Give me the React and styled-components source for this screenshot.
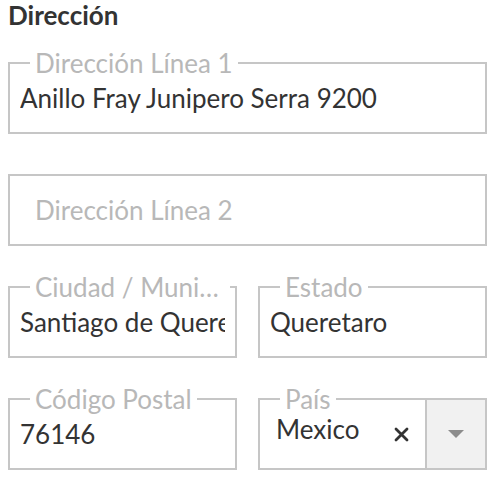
import React from "react";
import styled, { createGlobalStyle } from "styled-components";

const GlobalStyle = createGlobalStyle`
  body {
    margin: 0;
    background: #fff;
    font-family: Lato, "Open Sans", sans-serif;
    color: #333;
  }
`;

const Page = styled.div`
  width: 479px;
  padding: 0 11px 0 8px;
  display: flex;
  flex-direction: column;
  gap: 25px;
`;

const Title = styled.h2`
  margin: 0 0 -8px;
  font-size: 26px;
  font-weight: 700;
  line-height: 30px;
  color: #333;
`;

const Row = styled.div`
  display: grid;
  grid-template-columns: 1fr 1fr;
  gap: 21px;
`;

const Field = styled.fieldset`
  margin: 0;
  padding: 0 10px;
  min-width: 0;
  border: 2px solid #c6c6c6;
`;

const Legend = styled.legend`
  height: 32px;
  margin-left: 10px;
  padding: ${(p) => (p.$hidden ? "0" : "0 5px")};
  max-width: ${(p) => (p.$hidden ? "0.01px" : "calc(100% - 15px)")};
  visibility: ${(p) => (p.$hidden ? "hidden" : "visible")};
  font-size: 26px;
  line-height: 32px;
  color: #b8b8b8;
  white-space: nowrap;
  overflow: hidden;
  text-overflow: ellipsis;
`;

const Input = styled.input`
  display: block;
  box-sizing: border-box;
  width: 100%;
  height: 31px;
  margin: 3px 0 19px;
  padding: 0 0 0 ${(p) => (p.$indent ? "15px" : "0")};
  border: none;
  outline: none;
  background: transparent;
  font-family: Lato, "Open Sans", sans-serif;
  font-size: 26px;
  color: #333;

  &::placeholder {
    color: #b8b8b8;
  }
`;

const SelectRow = styled.div`
  display: flex;
  align-items: center;
  height: 68px;
  margin: -15px -10px 0 0;
`;

const SelectValue = styled.span`
  flex: 1;
  padding: 0 0 10px 6px;
  font-size: 26px;
  color: #333;
`;

const Clear = styled.span`
  display: flex;
  margin-right: 16px;
  color: #333;
`;

const Dropdown = styled.span`
  display: flex;
  align-items: center;
  justify-content: center;
  align-self: stretch;
  width: 58px;
  border-left: 2px solid #c6c6c6;
  background: #f1f1f1;
`;

const TextField = ({ label, value, placeholder }) => (
  <Field>
    <Legend $hidden={!label}>{label || "\u200b"}</Legend>
    <Input readOnly defaultValue={value} placeholder={placeholder} $indent={!label} />
  </Field>
);

const App = () => (
  <>
    <GlobalStyle />
    <Page>
      <Title>Dirección</Title>
      <TextField label="Dirección Línea 1" value="Anillo Fray Junipero Serra 9200" />
      <TextField placeholder="Dirección Línea 2" />
      <Row>
        <TextField label="Ciudad / Municipio" value="Santiago de Queretaro" />
        <TextField label="Estado" value="Queretaro" />
      </Row>
      <Row>
        <TextField label="Código Postal" value="76146" />
        <Field>
          <Legend>País</Legend>
          <SelectRow>
            <SelectValue>Mexico</SelectValue>
            <Clear>
              <svg width="15" height="15" viewBox="0 0 15 15">
                <path d="M2 2L13 13M13 2L2 13" stroke="currentColor" strokeWidth="2.8" strokeLinecap="round" />
              </svg>
            </Clear>
            <Dropdown>
              <svg width="16" height="8" viewBox="0 0 16 8">
                <polygon points="0,0 16,0 8,8" fill="#8c8c8c" />
              </svg>
            </Dropdown>
          </SelectRow>
        </Field>
      </Row>
    </Page>
  </>
);

export default App;
